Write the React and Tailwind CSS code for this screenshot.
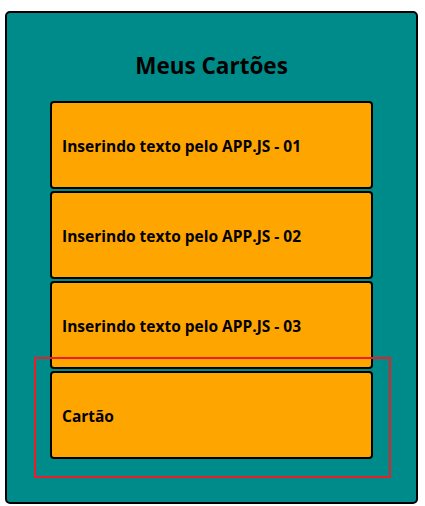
import React from 'react';

const cards = [
  'Inserindo texto pelo APP.JS - 01',
  'Inserindo texto pelo APP.JS - 02',
  'Inserindo texto pelo APP.JS - 03',
  'Cartão',
];

const App = () => {
  return (
    <div className="relative w-[425px] h-[506px] bg-white pt-[11px] pl-[5px]" style={{ fontFamily: '"Open Sans", "Noto Sans", sans-serif' }}>
      <div className="w-[413px] h-[493px] bg-[#008b8b] border-2 border-black rounded-[5px] flex flex-col items-center pt-[35px]">
        <h1 className="text-[22.5px] leading-[36px] font-bold text-black mb-[17px]">Meus Cartões</h1>

        <div className="flex flex-col gap-[2px]">
          {cards.map((text) => (
            <div
              key={text}
              className="w-[323px] h-[88px] bg-[#ffa500] border-2 border-black rounded-[4px] flex items-center px-[10px] pt-[3px]"
            >
              <span className="text-[15.5px] font-bold text-black">{text}</span>
            </div>
          ))}
        </div>
      </div>

      {/* selection overlay */}
      <div className="absolute left-[34px] top-[357px] w-[357px] h-[121px] border-2 border-[#ee1c25] pointer-events-none" />
    </div>
  );
};

export default App;
